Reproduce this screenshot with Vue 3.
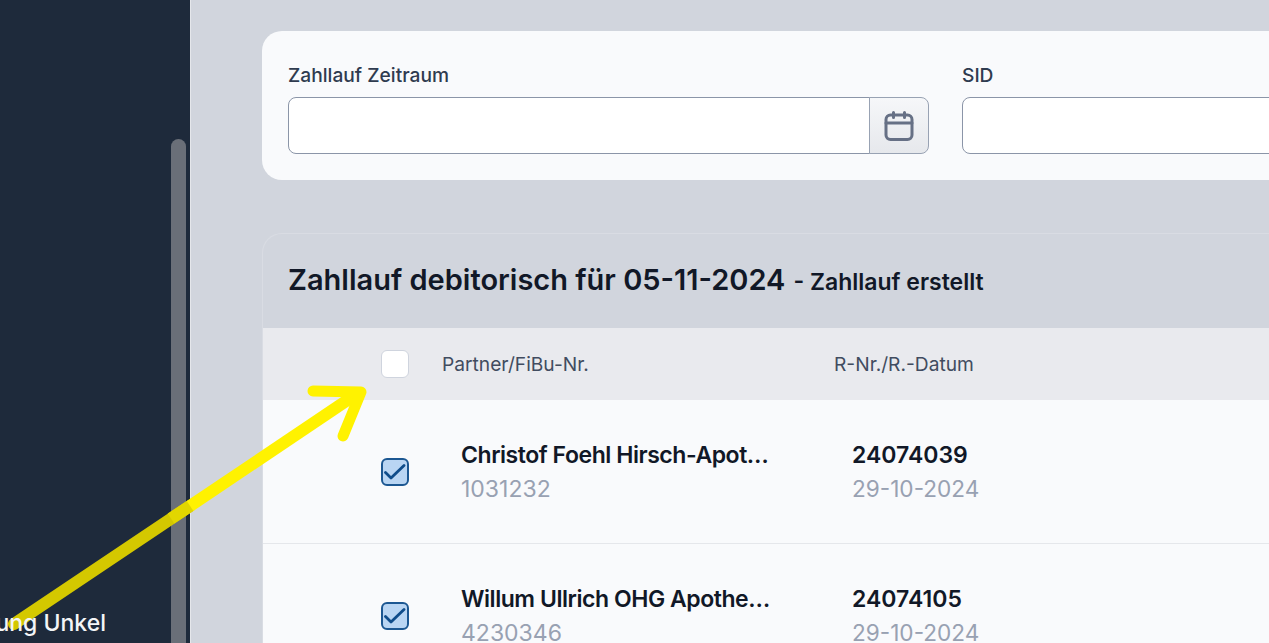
<script setup>
const rows = [
  { name: 'Christof Foehl Hirsch-Apot…', id: '1031232', nr: '24074039', date: '29-10-2024' },
  { name: 'Willum Ullrich OHG Apothe…', id: '4230346', nr: '24074105', date: '29-10-2024' },
]
</script>

<template>
  <div class="page">
    <aside class="sidebar">
      <div class="sidebar-label">ung Unkel</div>
      <div class="thumb"></div>
    </aside>
    <main class="main">
      <section class="filter-card">
        <div class="field period">
          <label>Zahllauf Zeitraum</label>
          <div class="input-group">
            <div class="input joined"></div>
            <button class="cal">
              <svg width="30" height="30" viewBox="0 0 30 30" fill="none" stroke="#667085" stroke-width="3" stroke-linecap="round" stroke-linejoin="round">
                <rect x="2" y="4" width="26" height="24.5" rx="4.5" />
                <path d="M2 12h26M9.5 1.5v5M20.5 1.5v5" />
              </svg>
            </button>
          </div>
        </div>
        <div class="field sid">
          <label>SID</label>
          <div class="input"></div>
        </div>
      </section>

      <section class="table-card">
        <header class="table-title">
          <h2>Zahllauf debitorisch für 05-11-2024</h2>
          <span>- Zahllauf erstellt</span>
        </header>
        <div class="thead">
          <div class="cell-check"><span class="check empty"></span></div>
          <div class="col-partner">Partner/FiBu-Nr.</div>
          <div class="col-nr">R-Nr./R.-Datum</div>
        </div>
        <div v-for="row in rows" :key="row.id" class="row">
          <div class="cell-check">
            <span class="check on">
              <svg width="22" height="18" viewBox="0 0 22 18" fill="none" stroke="#0f4c8a" stroke-width="2.8" stroke-linecap="round" stroke-linejoin="round">
                <path d="M1.5 9.5l5.5 5.5L20 2.5" />
              </svg>
            </span>
          </div>
          <div class="body-partner">
            <div class="strong name">{{ row.name }}</div>
            <div class="muted">{{ row.id }}</div>
          </div>
          <div class="body-nr">
            <div class="strong">{{ row.nr }}</div>
            <div class="muted date">{{ row.date }}</div>
          </div>
        </div>
      </section>
    </main>
    <svg class="arrow" width="1269" height="643" viewBox="0 0 1269 643" fill="none" stroke-linejoin="round">
      <path d="M14 624L190 506" stroke="#d4c800" stroke-width="12" stroke-linecap="round" />
      <path d="M171 518.5L190 506" stroke="#e2d600" stroke-width="12" />
      <path d="M190 506L358 393" stroke="#fff200" stroke-width="12" />
      <path d="M313 391L361 392L343 436" stroke="#fff200" stroke-width="11" stroke-linecap="round" />
    </svg>
  </div>
</template>

<style>
html, body { margin: 0; overflow: hidden; }
</style>

<style scoped>
.page {
  position: relative;
  display: flex;
  width: 1269px;
  height: 643px;
  overflow: hidden;
  font-family: Inter, "Liberation Sans", sans-serif;
  background: #d1d5dd;
}
.sidebar {
  position: relative;
  flex: 0 0 191px;
  height: 643px;
  box-sizing: border-box;
  background: #1e2a3b;
  border-right: 1px solid #e5e7eb;
  overflow: hidden;
}
.sidebar-label {
  position: absolute;
  z-index: 2;
  right: 84px;
  top: 609px;
  font-size: 23px;
  line-height: 28px;
  font-weight: 500;
  color: #f4f5f7;
  white-space: nowrap;
}
.thumb {
  position: absolute;
  left: 171px;
  top: 139px;
  width: 15px;
  height: 520px;
  border-radius: 8px;
  background: #6a6f78;
}
.main {
  flex: 1;
  min-width: 0;
  padding: 31px 0 0 71px;
}
.filter-card {
  box-sizing: border-box;
  display: flex;
  gap: 33px;
  width: 1200px;
  height: 149px;
  padding: 30px 26px 0;
  background: #f9fafc;
  border-radius: 20px;
}
.field label {
  display: block;
  height: 36px;
  font-size: 19.2px;
  line-height: 28px;
  font-weight: 500;
  color: #2f3b4f;
}
.period { flex: 0 0 641px; }
.sid { flex: 0 0 480px; }
.input-group { display: flex; }
.input {
  box-sizing: border-box;
  flex: 1;
  height: 57px;
  background: #fff;
  border: 1px solid #8b95a8;
  border-radius: 8px;
}
.joined { border-radius: 8px 0 0 8px; }
.cal {
  box-sizing: border-box;
  display: flex;
  align-items: center;
  justify-content: center;
  width: 60px;
  height: 57px;
  margin-left: -1px;
  padding: 0;
  background: linear-gradient(#f6f7f9, #e6e8ec);
  border: 1px solid #98a2b3;
  border-radius: 0 8px 8px 0;
}
.table-card {
  box-sizing: border-box;
  width: 1200px;
  margin-top: 53px;
  border: 1px solid #d9dce3;
  border-bottom: 0;
  border-radius: 20px 20px 0 0;
  overflow: hidden;
}
.table-title {
  box-sizing: border-box;
  display: flex;
  align-items: baseline;
  gap: 8px;
  height: 94px;
  padding: 27px 25px 0;
}
.table-title h2 {
  margin: 0;
  font-size: 29px;
  line-height: 38px;
  font-weight: 600;
  color: #111827;
}
.table-title span {
  font-size: 23px;
  font-weight: 600;
  color: #111827;
}
.thead, .row { display: flex; }
.thead {
  align-items: center;
  height: 72px;
  background: #e9eaee;
  font-size: 19.2px;
  color: #414c60;
}
.cell-check {
  flex: 0 0 146px;
  display: flex;
  justify-content: flex-end;
}
.check {
  box-sizing: border-box;
  display: flex;
  align-items: center;
  justify-content: center;
  width: 28px;
  height: 28px;
  border-radius: 6px;
}
.check.empty { background: #fff; border: 1px solid #cfd4de; }
.check.on { background: #b9d5f3; border: 2px solid #1c5792; }
.col-partner { margin-left: 33px; flex: 0 0 392px; }
.row {
  box-sizing: border-box;
  align-items: center;
  height: 144px;
  background: #f9fafc;
  border-bottom: 1px solid #e5e7eb;
}
.body-partner { margin-left: 52px; flex: 0 0 391px; }
.strong {
  font-size: 23px;
  line-height: 34px;
  font-weight: 600;
  color: #111827;
  white-space: nowrap;
}
.name { letter-spacing: -0.45px; }
.muted {
  font-size: 23px;
  line-height: 34px;
  color: #98a1b2;
}
.date { font-size: 22.6px; }
.arrow {
  position: absolute;
  inset: 0;
  z-index: 1;
  pointer-events: none;
}
</style>
